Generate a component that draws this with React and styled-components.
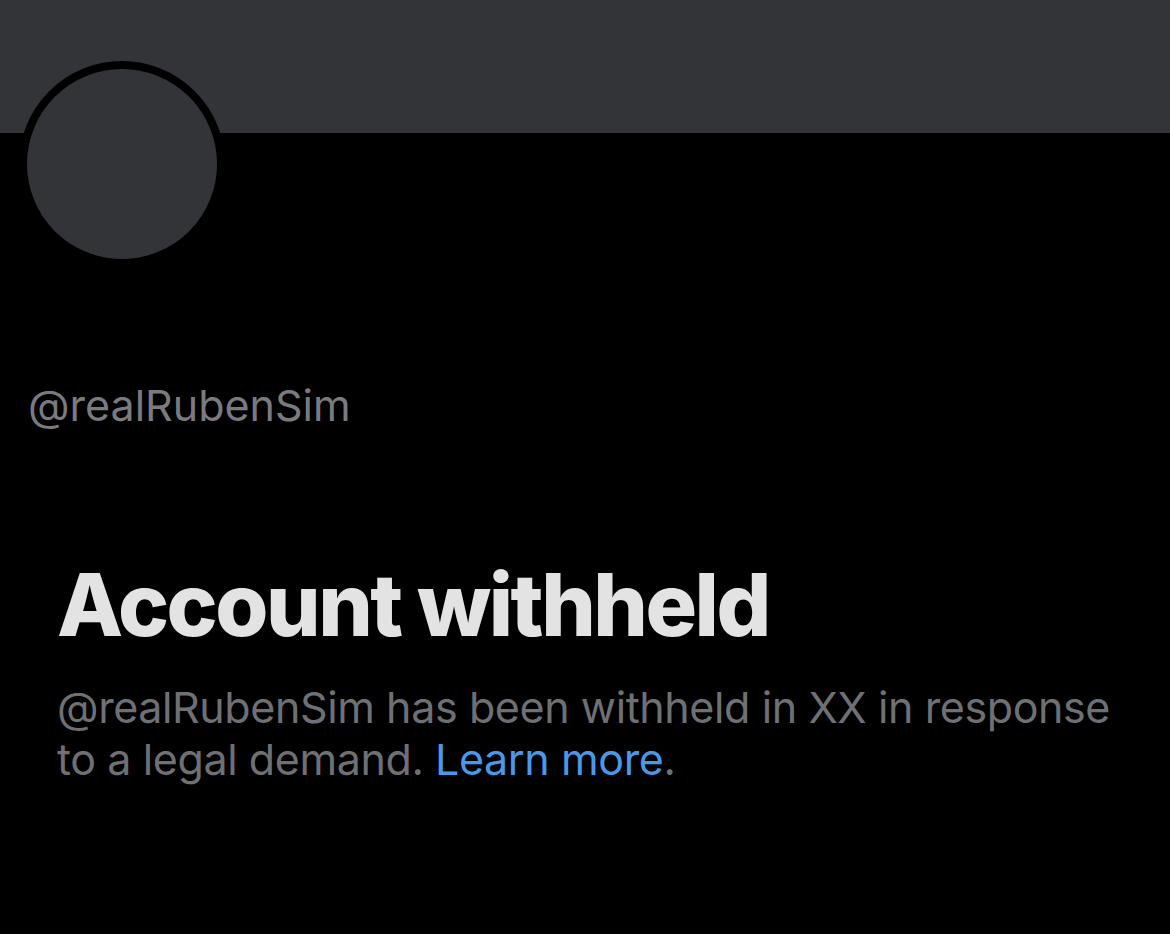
import React from 'react'
import styled, { createGlobalStyle } from 'styled-components'

const Global = createGlobalStyle`
  html, body {
    margin: 0;
    padding: 0;
    background: #000;
  }
  body {
    font-family: Inter, Roboto, "Liberation Sans", sans-serif;
  }
`

const Page = styled.div`
  width: 1170px;
  height: 934px;
  background: #000;
  overflow: hidden;
`

const Banner = styled.div`
  height: 133px;
  background: #333438;
`

const Body = styled.div`
  padding: 0 0 0 19px;
`

const Avatar = styled.div`
  width: 190px;
  height: 190px;
  margin-top: -72px;
  border-radius: 50%;
  background: #333438;
  border: 8px solid #000;
`

const Handle = styled.div`
  margin: 112px 0 0 9px;
  font-size: 43px;
  color: #7b7b7f;
`

const Notice = styled.section`
  margin: 131px 0 0 38px;
  width: 1075px;
`

const Title = styled.h1`
  margin: 0;
  font-size: 86px;
  font-weight: 800;
  color: #e3e3e3;
  letter-spacing: -2.5px;
  line-height: 1;
`

const Message = styled.p`
  margin: 33px 0 0;
  font-size: 43px;
  line-height: 52px;
  color: #6f7074;
  letter-spacing: -0.4px;
`

const Link = styled.a`
  color: #4a99e9;
  text-decoration: none;
`

export default function App() {
  return (
    <Page>
      <Global />
      <Banner />
      <Body>
        <Avatar />
        <Handle>@realRubenSim</Handle>
        <Notice>
          <Title>Account withheld</Title>
          <Message>
            @realRubenSim has been withheld in XX in response to a legal demand.{' '}
            <Link href="#">Learn more</Link>.
          </Message>
        </Notice>
      </Body>
    </Page>
  )
}
